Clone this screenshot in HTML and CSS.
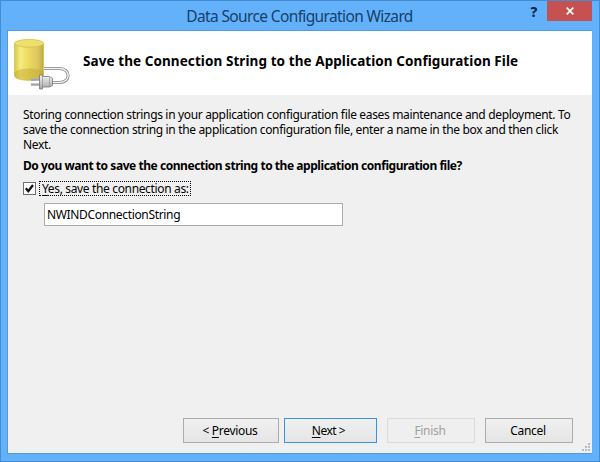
FILE: index.html
```html
<!DOCTYPE html>
<html lang="en">
<head>
<meta charset="utf-8">
<title>Data Source Configuration Wizard</title>
<link rel="stylesheet" href="styles.css">
</head>
<body>
<main class="window">
  <div class="titlebar">
    <h1 class="title">Data Source Configuration Wizard</h1>
    <div class="controls"><span class="help">?</span>
      <span class="close"><svg width="8" height="8" viewBox="0 0 8 8"><path d="M.7.7 7.3 7.3M7.3.7.7 7.3" stroke="#fff" stroke-width="1.7"/></svg></span>
    </div>
  </div>
  <div class="client">
    <header class="banner">
      <svg class="db-icon" width="66" height="62" viewBox="0 0 66 62">
        <defs>
          <linearGradient id="body"><stop offset="0" stop-color="#d9c840"/><stop offset=".2" stop-color="#f5eb83"/><stop offset=".5" stop-color="#ecd95c"/><stop offset=".8" stop-color="#dcc765"/><stop offset="1" stop-color="#c2a935"/></linearGradient>
          <linearGradient id="metal" x2="0" y2="1"><stop offset="0" stop-color="#f5f5f5"/><stop offset="1" stop-color="#a6a6a6"/></linearGradient>
        </defs>
        <path d="M6.500 9.500v32c0 6.500 29 6.500 29 0v-32z" fill="url(#body)" stroke="#cdb748" stroke-width=".6"/>
        <path d="M6.700 38.500c3-5.500 25.600-5.500 28.600 0v3c0 6.300-28.600 6.300-28.600 0z" fill="#c0a32b" opacity=".45"/>
        <ellipse cx="21" cy="9.300" rx="14.500" ry="3.900" fill="#ede06c" stroke="#d3bf50" stroke-width=".8"/>
        <path d="M36 34.500H51.500C63 34.500 63 48.500 51.500 48.500H44" fill="none" stroke="#858585" stroke-width="3"/>
        <path d="M36 34.500H51.500C63 34.500 63 48.500 51.500 48.500H44" fill="none" stroke="#f2f2f2" stroke-width="1.400"/>
        <path d="M23 45.500h9M23 50.500h9" stroke="#777" stroke-width="2.200"/>
        <path d="M23 45h9M23 50h9" stroke="#ddd" stroke-width=".9"/>
        <path d="M31.500 41h3v1.500h7l3 2v7l-3 1.500h-7v2h-3z" fill="url(#metal)" stroke="#777" stroke-width=".8"/>
        <path d="M34.500 43v10M41.500 43.500v9.500" stroke="#888" stroke-width=".6"/>
      </svg>
      <h2 class="heading">Save the Connection String to the Application Configuration File</h2>
    </header>
    <section class="content">
      <p class="intro">Storing connection strings in your application configuration file eases maintenance and deployment. To save the connection string in the application configuration file, enter a name in the box and then click Next.</p>
      <p class="question">Do you want to save the connection string to the application configuration file?</p>
      <div class="option">
        <span class="checkbox"><svg width="11" height="11" viewBox="0 0 11 11"><path d="M1.800 5.200 4.300 8.200 9 2" fill="none" stroke="#111" stroke-width="2.300"/></svg></span>
        <span class="option-label"><u>Y</u>es, save the connection as:</span>
      </div>
      <div class="field">NWINDConnectionString</div>
    </section>
    <footer class="actions">
      <div class="button previous"><span>&lt; <u>P</u>revious</span></div>
      <div class="button next"><span><u>N</u>ext &gt;</span></div>
      <div class="button finish"><span><u>F</u>inish</span></div>
      <div class="button cancel"><span>Cancel</span></div>
    </footer>
    <svg class="grip" width="9" height="9" viewBox="0 0 9 9" fill="#bcbcbc"><path d="M6 0h2v2H6zM3 3h2v2H3zM6 3h2v2H6zM0 6h2v2H0zM3 6h2v2H3zM6 6h2v2H6z"/></svg>
  </div>
</main>
</body>
</html>
```
FILE: styles.css
```css
* { box-sizing: border-box; }
body { margin: 0; font: 12px/15px "Noto Sans", "Open Sans", sans-serif; color: #000; }
h1, h2, p { margin: 0; }
u { text-decoration-thickness: 1px; text-underline-offset: 2px; }

.window { width: 600px; height: 462px; display: flex; flex-direction: column; padding: 0 7px 7px 6px; background: #63b1fb; border: 1px solid #458bd0; }
.titlebar { height: 29px; flex: none; position: relative; display: flex; justify-content: center; }
.title { font-size: 15.5px; font-weight: 400; line-height: 31px; letter-spacing: -.63px; color: #173f68; white-space: nowrap; }
.controls { position: absolute; right: 0; top: 0; display: flex; }
.help { width: 26px; font-weight: 800; font-size: 14px; line-height: 21px; text-align: center; color: #0c2944; }
.close { width: 45px; height: 20px; display: flex; align-items: center; justify-content: center; background: #c75050; }
.client { position: relative; flex: 1; display: flex; flex-direction: column; border: 1px solid #4c9be6; border-right-width: 0; background: #f0f0f0; }
.banner { height: 64px; flex: none; display: flex; align-items: center; background: #fff; }
.db-icon { flex: none; margin-top: 4px; }
.heading { margin: -4px 0 0 9px; font-size: 13.5px; font-weight: 700; white-space: nowrap; letter-spacing: .08px; }
.content { flex: 1; padding: 12px 15px 0; }
.intro { letter-spacing: -.34px; }
.question { margin-top: 6px; font-weight: 700; letter-spacing: -.45px; white-space: nowrap; }
.option { display: flex; align-items: center; margin-top: 7px; height: 16px; white-space: nowrap; }
.checkbox { width: 13px; height: 13px; border: 1px solid #707070; background: #fff; display: flex; }
.option-label { margin-left: 3px; width: 152px; height: 15px; padding-left: 2px; border: 1px dotted #000; line-height: 13px; letter-spacing: -.35px; }
.field { margin: 7px 0 0 21px; width: 299px; height: 23px; padding-left: 2px; border: 1px solid #ababab; background: #fff; line-height: 21px; letter-spacing: -.34px; }
.actions { flex: none; display: flex; padding: 0 19px 10px 175px; }
.button { height: 25px; line-height: 23px; padding-right: 2px; text-align: center; border: 1px solid #acacac; background: linear-gradient(#f0f0f0, #e5e5e5); letter-spacing: -.3px; }
.previous { width: 96px; }
.next { width: 93px; padding-right: 4px; margin-left: 5px; border-color: #3c91e5; letter-spacing: -.5px; }
.finish { width: 88px; margin-left: 10px; border-color: #dadada; background: #efefef; color: #a0a0a0; }
.cancel { width: 88px; margin-left: 10px; }
.grip { position: absolute; right: 1px; bottom: 1px; }
```
